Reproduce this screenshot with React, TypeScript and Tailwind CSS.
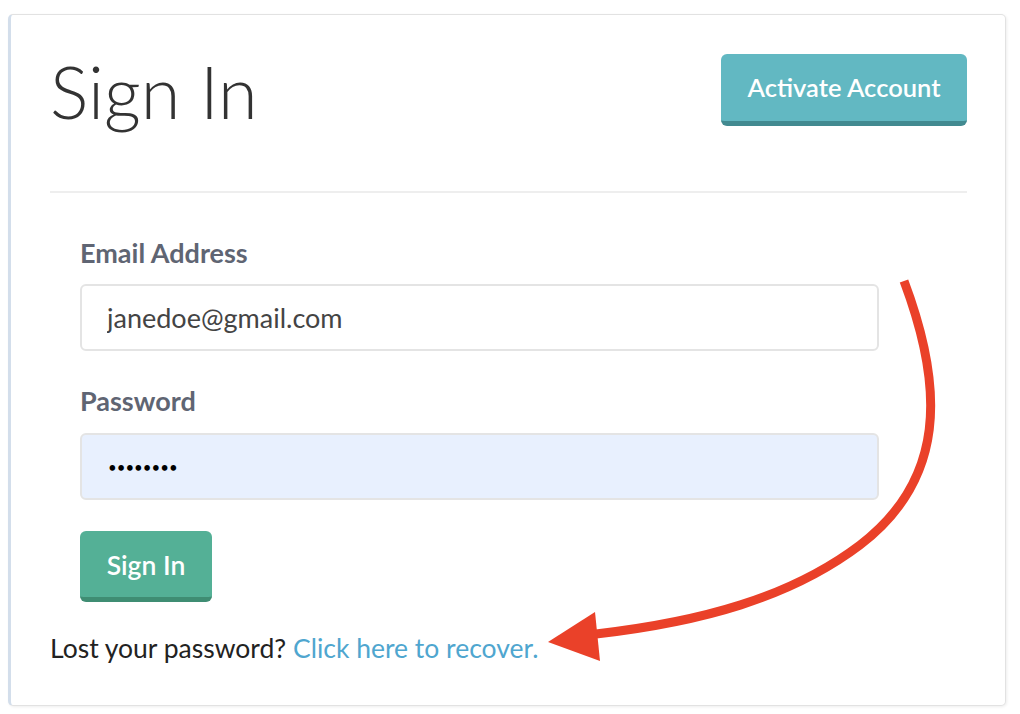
import React from "react";

export default function App() {
  const sans = { fontFamily: "Lato, 'Open Sans', sans-serif" };

  return (
    <div className="min-h-screen bg-white pt-[14px] pl-[8px] pr-[14px]" style={sans}>
      <div className="relative h-[692px] rounded-[5px] border border-[#e2e2e2] border-l-[3px] border-l-[#d3deeb] bg-white pl-[39px] pr-[38px] pt-[39px] shadow-[1px_1px_3px_rgba(0,0,0,0.07)]">
        {/* Header */}
        <div className="flex h-[72px] items-start justify-between">
          <h1 className="mt-[1px] text-[72px] font-light leading-[72px] text-[#333333]">Sign In</h1>
          <button
            type="button"
            className="h-[72px] w-[246px] rounded-[6px] border-b-[5px] border-[#428a90] bg-[#62b8c2] text-[25.5px] font-semibold text-white"
          >
            Activate Account
          </button>
        </div>

        <hr className="mt-[65px] border-t-2 border-[#eeeeee]" />

        {/* Form */}
        <form className="ml-[30px] mt-[45px] w-[799px]">
          <label className="block h-[30px] text-[27px] font-bold leading-[30px] text-[#5f6573]">
            Email Address
          </label>
          <input
            type="email"
            defaultValue="janedoe@gmail.com"
            className="mt-[16px] block h-[67px] w-full rounded-[6px] border-2 border-[#e4e4e4] bg-white px-[25px] text-[27px] text-[#444444] outline-none"
          />

          <label className="mt-[35px] block h-[30px] text-[27px] font-bold leading-[30px] text-[#5f6573]">
            Password
          </label>
          <input
            type="password"
            defaultValue="password"
            className="mt-[17px] block h-[67px] w-full rounded-[6px] border-2 border-[#e4e4e4] bg-[#e8f0fe] px-[26px] text-[15px] text-black outline-none"
          />

          <button
            type="button"
            className="mt-[31px] h-[71px] w-[132px] rounded-[6px] border-b-[5px] border-[#3f8d73] bg-[#54b096] pt-[4px] text-[26.5px] font-semibold text-white"
          >
            Sign In
          </button>
        </form>

        <p className="mt-[31px] text-[26.5px] leading-[30px] text-[#222222]">
          Lost your password? <a className="text-[#4fa6cf]">Click here to recover.</a>
        </p>

        {/* Annotation arrow */}
        <svg className="pointer-events-none absolute left-[-11px] top-[-15px]" width="1020" height="714" viewBox="0 0 1020 714">
          <path
            d="M904 281 C 945 390, 945 480, 860 545 C 790 598, 700 622, 596 634"
            fill="none"
            stroke="#ea4129"
            strokeWidth="9"
          />
          <polygon points="548,642 595,612 600,661" fill="#ea4129" />
        </svg>
      </div>
    </div>
  );
}
